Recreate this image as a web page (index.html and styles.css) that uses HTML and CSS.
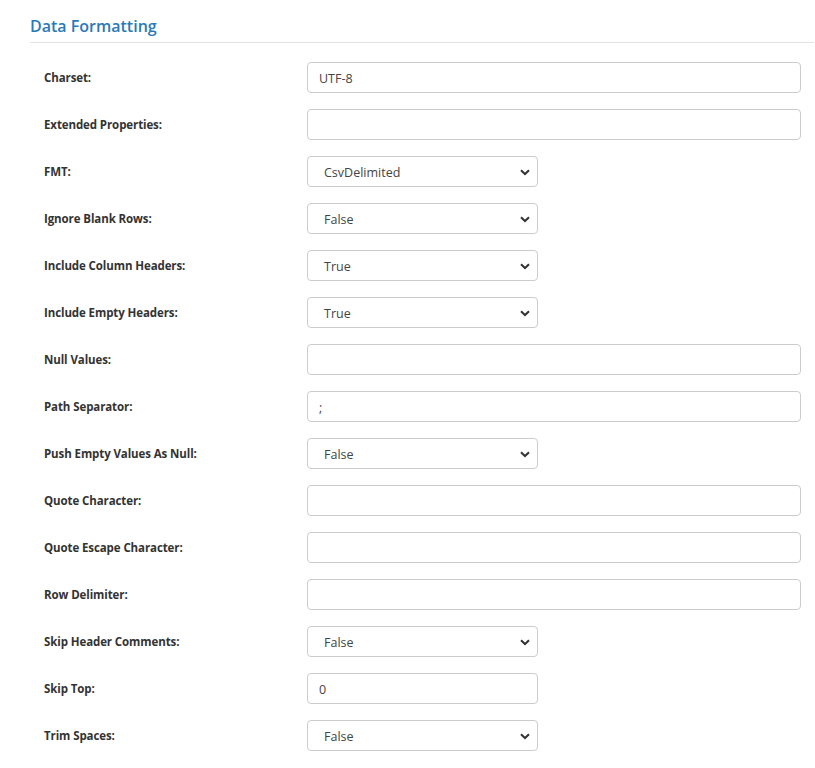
FILE: index.html
```html
<!DOCTYPE html>
<html>
<head>
<meta charset="utf-8">
<link rel="stylesheet" href="styles.css">
</head>
<body>
<div class="panel">
  <h2 class="title">Data Formatting</h2>
  <div class="form">
    <div class="row"><label class="lbl">Charset:</label><input class="inp" value="UTF-8"></div>
    <div class="row"><label class="lbl">Extended Properties:</label><input class="inp" value=""></div>
    <div class="row"><label class="lbl">FMT:</label><div class="sel"><span>CsvDelimited</span><svg class="chev" width="10" height="7" viewBox="0 0 10 7"><path d="M1 1.2 L5 5 L9 1.2" fill="none" stroke="#333" stroke-width="2"/></svg></div></div>
    <div class="row"><label class="lbl">Ignore Blank Rows:</label><div class="sel"><span>False</span><svg class="chev" width="10" height="7" viewBox="0 0 10 7"><path d="M1 1.2 L5 5 L9 1.2" fill="none" stroke="#333" stroke-width="2"/></svg></div></div>
    <div class="row"><label class="lbl">Include Column Headers:</label><div class="sel"><span>True</span><svg class="chev" width="10" height="7" viewBox="0 0 10 7"><path d="M1 1.2 L5 5 L9 1.2" fill="none" stroke="#333" stroke-width="2"/></svg></div></div>
    <div class="row"><label class="lbl">Include Empty Headers:</label><div class="sel"><span>True</span><svg class="chev" width="10" height="7" viewBox="0 0 10 7"><path d="M1 1.2 L5 5 L9 1.2" fill="none" stroke="#333" stroke-width="2"/></svg></div></div>
    <div class="row"><label class="lbl">Null Values:</label><input class="inp" value=""></div>
    <div class="row"><label class="lbl">Path Separator:</label><input class="inp" value=";"></div>
    <div class="row"><label class="lbl">Push Empty Values As Null:</label><div class="sel"><span>False</span><svg class="chev" width="10" height="7" viewBox="0 0 10 7"><path d="M1 1.2 L5 5 L9 1.2" fill="none" stroke="#333" stroke-width="2"/></svg></div></div>
    <div class="row"><label class="lbl">Quote Character:</label><input class="inp" value=""></div>
    <div class="row"><label class="lbl">Quote Escape Character:</label><input class="inp" value=""></div>
    <div class="row"><label class="lbl">Row Delimiter:</label><input class="inp" value=""></div>
    <div class="row"><label class="lbl">Skip Header Comments:</label><div class="sel"><span>False</span><svg class="chev" width="10" height="7" viewBox="0 0 10 7"><path d="M1 1.2 L5 5 L9 1.2" fill="none" stroke="#333" stroke-width="2"/></svg></div></div>
    <div class="row"><label class="lbl">Skip Top:</label><input class="inp short" value="0"></div>
    <div class="row"><label class="lbl">Trim Spaces:</label><div class="sel"><span>False</span><svg class="chev" width="10" height="7" viewBox="0 0 10 7"><path d="M1 1.2 L5 5 L9 1.2" fill="none" stroke="#333" stroke-width="2"/></svg></div></div>
  </div>
</div>
</body>
</html>
```
FILE: styles.css
```css
html, body {
  margin: 0;
  padding: 0;
  background: #fff;
  font-family: "Open Sans", "Noto Sans", sans-serif;
}
.panel {
  padding: 0 0 0 30px;
}
.title {
  margin: 0;
  padding-top: 14px;
  height: 28px;
  font-size: 16px;
  font-weight: 600;
  line-height: 25px;
  color: #2a7ab8;
  border-bottom: 1px solid #e2e2e2;
  margin-right: 1px;
}
.form {
  display: flex;
  flex-direction: column;
  gap: 16px;
  padding: 19px 14px 0 14px;
}
.row {
  display: grid;
  grid-template-columns: 263px 1fr;
  align-items: center;
  height: 31px;
}
.lbl {
  font-size: 11.5px;
  font-weight: 700;
  color: #333;
  letter-spacing: -0.1px;
}
.inp {
  box-sizing: border-box;
  height: 31px;
  width: 100%;
  border: 1px solid #ccc;
  border-radius: 4px;
  padding: 2px 11px 0;
  font-family: "Open Sans", sans-serif;
  font-size: 12.5px;
  color: #444;
  outline: none;
  margin: 0;
}
.inp.short {
  width: 231px;
}
.sel {
  position: relative;
  box-sizing: border-box;
  height: 31px;
  width: 231px;
  border: 1px solid #ccc;
  border-radius: 4px;
  padding: 2px 16px 0;
  display: flex;
  align-items: center;
  font-size: 12.5px;
  color: #444;
}
.chev {
  position: absolute;
  right: 7px;
  top: 12px;
}
```
